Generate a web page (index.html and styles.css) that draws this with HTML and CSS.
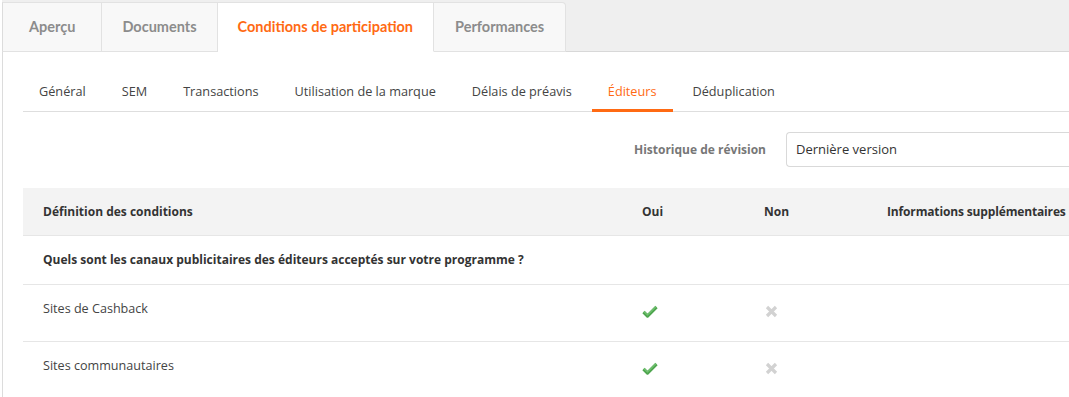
FILE: index.html
```html
<!DOCTYPE html>
<html lang="fr">
<head>
    <meta charset="UTF-8">
    <title>Conditions de participation</title>
    <link rel="stylesheet" href="styles.css">
</head>
<body>
    <div class="page">
        <ul class="main-tabs">
            <li class="main-tab">Aperçu</li>
            <li class="main-tab">Documents</li>
            <li class="main-tab active">Conditions de participation</li>
            <li class="main-tab last">Performances</li>
        </ul>

        <div class="panel">
            <ul class="sub-tabs">
                <li class="sub-tab">Général</li>
                <li class="sub-tab">SEM</li>
                <li class="sub-tab">Transactions</li>
                <li class="sub-tab">Utilisation de la marque</li>
                <li class="sub-tab">Délais de préavis</li>
                <li class="sub-tab active">Éditeurs</li>
                <li class="sub-tab">Déduplication</li>
            </ul>

            <div class="revision">
                <label class="revision-label">Historique de révision</label>
                <div class="revision-select">Dernière version</div>
            </div>

            <table class="conditions">
                <thead>
                    <tr>
                        <th class="col-def">Définition des conditions</th>
                        <th class="col-yes">Oui</th>
                        <th class="col-no">Non</th>
                        <th class="col-info">Informations supplémentaires</th>
                    </tr>
                </thead>
                <tbody>
                    <tr class="question">
                        <td colspan="4">Quels sont les canaux publicitaires des éditeurs acceptés sur votre programme ?</td>
                    </tr>
                    <tr class="answer">
                        <td>Sites de Cashback</td>
                        <td>
                            <svg class="icon-yes" width="16" height="13" viewBox="0 0 16 13"><path d="M1.5 7 L5.5 11 L14.5 2" fill="none" stroke="#4fa64f" stroke-width="3.2" stroke-linejoin="round"/><path d="M2 6.5 L5.5 10 L14 1.5" fill="none" stroke="#72c272" stroke-width="1.2"/></svg>
                        </td>
                        <td>
                            <svg class="icon-no" width="13" height="13" viewBox="0 0 13 13"><path d="M2 2 L11 11 M11 2 L2 11" fill="none" stroke="#d2d2d2" stroke-width="3.2"/></svg>
                        </td>
                        <td></td>
                    </tr>
                    <tr class="answer">
                        <td>Sites communautaires</td>
                        <td>
                            <svg class="icon-yes" width="16" height="13" viewBox="0 0 16 13"><path d="M1.5 7 L5.5 11 L14.5 2" fill="none" stroke="#4fa64f" stroke-width="3.2" stroke-linejoin="round"/><path d="M2 6.5 L5.5 10 L14 1.5" fill="none" stroke="#72c272" stroke-width="1.2"/></svg>
                        </td>
                        <td>
                            <svg class="icon-no" width="13" height="13" viewBox="0 0 13 13"><path d="M2 2 L11 11 M11 2 L2 11" fill="none" stroke="#d2d2d2" stroke-width="3.2"/></svg>
                        </td>
                        <td></td>
                    </tr>
                </tbody>
            </table>
        </div>
    </div>
</body>
</html>
```

FILE: styles.css
```css
body {
    margin: 0;
    font-family: "Open Sans", Arial, sans-serif;
    color: #333;
    background: #fff;
    overflow: hidden;
}

.page {
    margin-left: 2px;
    border-left: 1px solid #dcdcdc;
    min-height: 397px;
}

.main-tabs {
    display: flex;
    margin: 0 0 0 -1px;
    padding: 2px 0 0;
    list-style: none;
    background: #efefef;
    border-bottom: 1px solid #d8d8d8;
}

.main-tab {
    height: 48px;
    line-height: 47px;
    padding: 0 20px;
    margin-bottom: -1px;
    background: #f8f8f8;
    border: 1px solid #e2e2e2;
    border-left: none;
    font-family: Lato, Arial, sans-serif;
    font-size: 14.5px;
    font-weight: bold;
    color: #8c8c8c;
}

.main-tab:first-child {
    border-left: 1px solid #dcdcdc;
    padding: 0 26px 0 26px;
}

.main-tab.active {
    background: #fff;
    color: #ff6a13;
    border-bottom-color: #fff;
}

.main-tab.last {
    padding: 0 21px;
    border-top-right-radius: 4px;
}

.panel {
    padding: 0 0 0 20px;
}

.sub-tabs {
    display: flex;
    gap: 4px;
    margin: 0;
    padding: 30px 0 0;
    list-style: none;
    border-bottom: 1px solid #dedede;
}

.sub-tab {
    padding: 0 16px 8px;
    font-size: 12.7px;
    color: #444;
    line-height: 19px;
    border-bottom: 3px solid transparent;
    margin-bottom: -1px;
}

.sub-tab.active {
    color: #ff6a13;
    border-bottom-color: #ff6a13;
}

.revision {
    display: flex;
    justify-content: flex-end;
    align-items: center;
    gap: 20px;
    margin: 20px 0 21px;
}

.revision-label {
    font-size: 12px;
    font-weight: bold;
    color: #777;
}

.revision-select {
    width: 293px;
    height: 33px;
    line-height: 33px;
    padding-left: 9px;
    border: 1px solid #d9d9d9;
    border-right: none;
    border-radius: 4px 0 0 4px;
    font-size: 13px;
    color: #333;
    margin-right: -20px;
}

.conditions {
    width: 1066px;
    table-layout: fixed;
    border-collapse: collapse;
    font-size: 12px;
}

.conditions th,
.conditions td {
    box-sizing: border-box;
    padding: 0;
    text-align: left;
    border-bottom: 1px solid #e6e6e6;
}

.conditions th {
    background: #f3f3f3;
    height: 47px;
    font-weight: bold;
    color: #333;
}

.conditions .question td {
    font-weight: bold;
    color: #333;
    height: 49px;
}

.conditions .answer td {
    height: 57px;
    vertical-align: top;
    padding-top: 15px;
    font-size: 12.6px;
    line-height: 18px;
    color: #444;
}

.conditions th:first-child,
.conditions td:first-child {
    padding-left: 20px;
}

.col-def {
    width: 619px;
}

.col-yes {
    width: 122px;
}

.col-no {
    width: 123px;
}

.col-info {
    white-space: nowrap;
    letter-spacing: -0.15px;
}

.icon-yes,
.icon-no {
    display: block;
    margin-top: 5px;
}

.icon-no {
    margin-left: 1px;
}
```
